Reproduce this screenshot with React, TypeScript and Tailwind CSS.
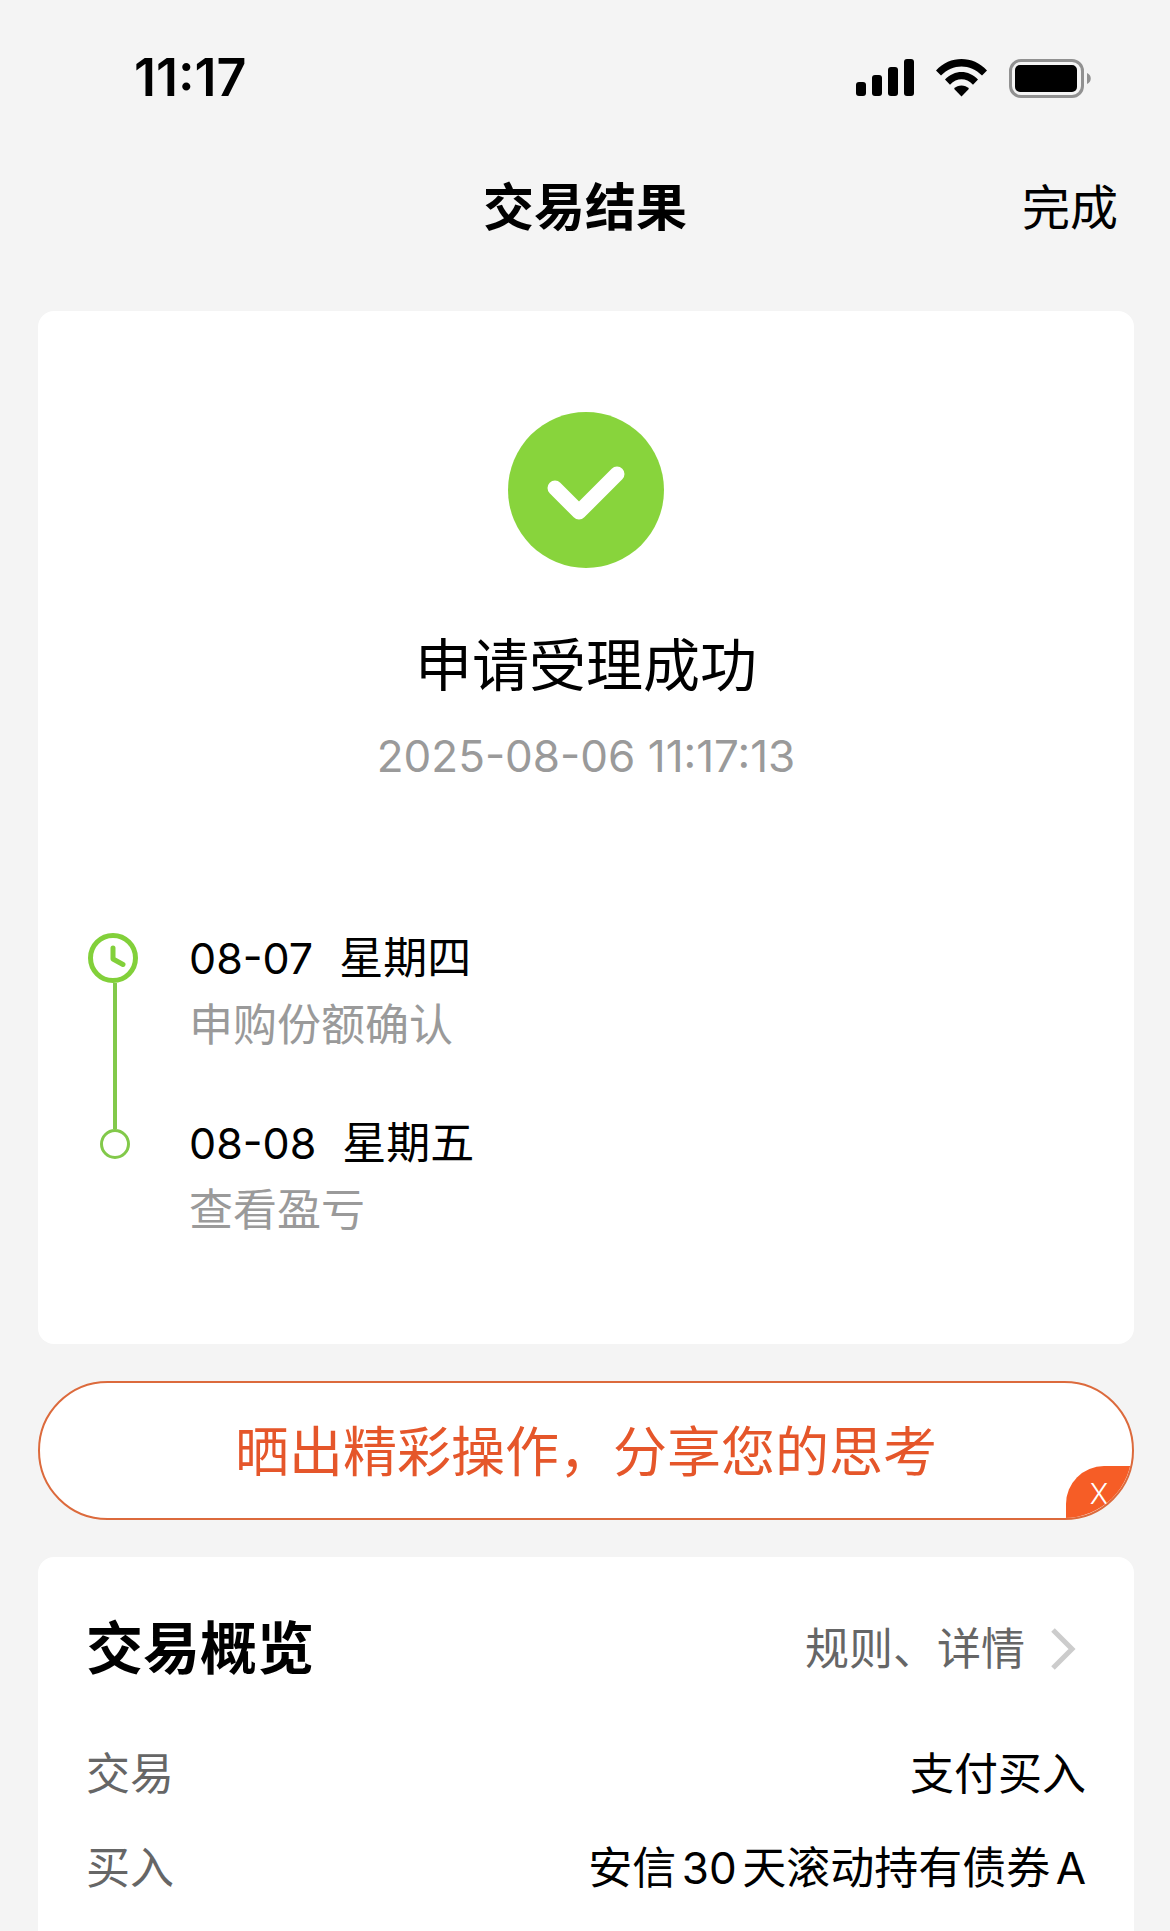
import React from 'react';

const steps = [
  { date: '08-07', weekday: '星期四', note: '申购份额确认' },
  { date: '08-08', weekday: '星期五', note: '查看盈亏' },
];

const rows = [
  { label: '交易', value: '支付买入' },
  { label: '买入', value: '安信30天滚动持有债券A' },
];

function StatusBar() {
  return (
    <div className="flex items-center justify-between h-[156px] pl-[134px] pr-[78px]">
      <span className="text-[52px] leading-[60px] font-semibold">11:17</span>
      <div className="flex items-center gap-[22px]">
        <svg width="58" height="38" viewBox="0 0 58 38" aria-hidden="true">
          <rect x="0" y="23" width="10" height="14" rx="3" />
          <rect x="16" y="16" width="10" height="21" rx="3" />
          <rect x="32" y="8" width="10" height="29" rx="3" />
          <rect x="48" y="0" width="10" height="37" rx="3" />
        </svg>
        <svg width="51" height="38" viewBox="0 0 51 38" aria-hidden="true">
          <path d="M0 11.5 C14 -3.8 37 -3.8 51 11.5 L46 16.5 C34 4.5 17 4.5 5 16.5 Z" />
          <path d="M9 20.5 C18.5 10.5 32.5 10.5 42 20.5 L37 25.8 C30 18.5 21 18.5 14 25.8 Z" />
          <path d="M18 29.8 C22 25.4 29 25.4 33 29.8 L25.5 37.5 Z" />
        </svg>
        <svg width="83" height="39" viewBox="0 0 83 39" aria-hidden="true">
          <rect x="1.5" y="1.5" width="72" height="36" rx="10.5" fill="none" stroke="#919191" strokeWidth="3" />
          <rect x="6" y="6" width="62" height="27" rx="5" />
          <path d="M78 14 C83 16 83 23 78 25 Z" fill="#919191" />
        </svg>
      </div>
    </div>
  );
}

function Timeline() {
  return (
    <div className="flex mt-[141px]">
      <div className="flex flex-col items-center w-[54px] pt-2">
        <svg className="self-start" width="50" height="50" viewBox="0 0 50 50" fill="none" stroke="#82d03a" aria-hidden="true">
          <circle cx="25" cy="25" r="22.5" strokeWidth="5" />
          <path d="M25 15 V26 L35 31.5" strokeWidth="5" strokeLinecap="round" strokeLinejoin="round" />
        </svg>
        <div className="w-1 h-[146px] bg-[#82c94a]" />
        <div className="size-[30px] shrink-0 rounded-full border-3 border-[#82c94a]" />
      </div>
      <ol className="pl-[47px] text-[44px] leading-[67px]">
        {steps.map(step => (
          <li key={step.date} className="mb-[51px] last:mb-0">
            <p className="flex gap-[26px]">
              <time className="text-[43px]">{step.date}</time>
              <span>{step.weekday}</span>
            </p>
            <p className="text-[#9a9a9a]">{step.note}</p>
          </li>
        ))}
      </ol>
    </div>
  );
}

export default function App() {
  return (
    <div className="flex flex-col min-h-screen bg-[#f4f4f4] text-black font-[Inter,'Noto_Sans_CJK_SC',sans-serif]">
      <StatusBar />
      <header className="grid grid-cols-[1fr_auto_1fr] items-center h-[104px] pr-[52px]">
        <h1 className="col-start-2 pl-[52px] text-[51px] leading-[60px] font-bold">交易结果</h1>
        <button type="button" className="justify-self-end text-[48px] leading-[60px]">完成</button>
      </header>

      <main className="flex flex-col flex-1 gap-[37px] pt-[51px] pl-[38px] pr-[36px]">
        <section className="rounded-2xl bg-white px-[50px] pt-[101px] pb-[100px]">
          <div className="flex flex-col items-center">
            <svg width="156" height="156" viewBox="0 0 156 156" aria-hidden="true">
              <circle cx="78" cy="78" r="78" fill="#88d43c" />
              <path d="M47 76 L71 100 L109 62" fill="none" stroke="#fff" strokeWidth="15" strokeLinecap="round" strokeLinejoin="round" />
            </svg>
            <h2 className="mt-[62px] text-[57px] leading-[72px]">申请受理成功</h2>
            <time className="mt-[26px] text-[44px] leading-[56px] text-[#9a9a9a]">2025-08-06 11:17:13</time>
          </div>
          <Timeline />
        </section>

        <div className="relative h-[139px] rounded-full border-2 border-[#dc6a3c] bg-white overflow-hidden">
          <a href="#share" className="flex items-center justify-center h-full pt-1 text-[54px] text-[#e5562a]">
            晒出精彩操作，分享您的思考
          </a>
          <button
            type="button"
            aria-label="关闭"
            className="absolute right-0 bottom-0 w-[66px] h-[52px] pt-1 rounded-tl-[38px] bg-[#f65d26] text-[28px] leading-[48px] font-light text-white"
          >
            X
          </button>
        </div>

        <section className="flex-1 rounded-t-2xl bg-white px-[48px] pt-[56px]">
          <div className="flex items-center justify-between h-[72px]">
            <h2 className="text-[57px] leading-[72px] font-bold">交易概览</h2>
            <a href="#detail" className="flex items-center gap-[26px] pr-[10px] text-[44px] leading-[72px] text-[#666]">
              规则、详情
              <svg width="25" height="42" viewBox="0 0 25 42" fill="none" stroke="#ccc" strokeWidth="5" aria-hidden="true">
                <path d="M2 2 L21 21 L2 40" />
              </svg>
            </a>
          </div>
          <dl className="mt-[42px] text-[44px] leading-[94px] [text-autospace:normal]">
            {rows.map(row => (
              <div key={row.label} className="flex justify-between">
                <dt className="text-[#666]">{row.label}</dt>
                <dd>{row.value}</dd>
              </div>
            ))}
          </dl>
        </section>
      </main>
    </div>
  );
}
